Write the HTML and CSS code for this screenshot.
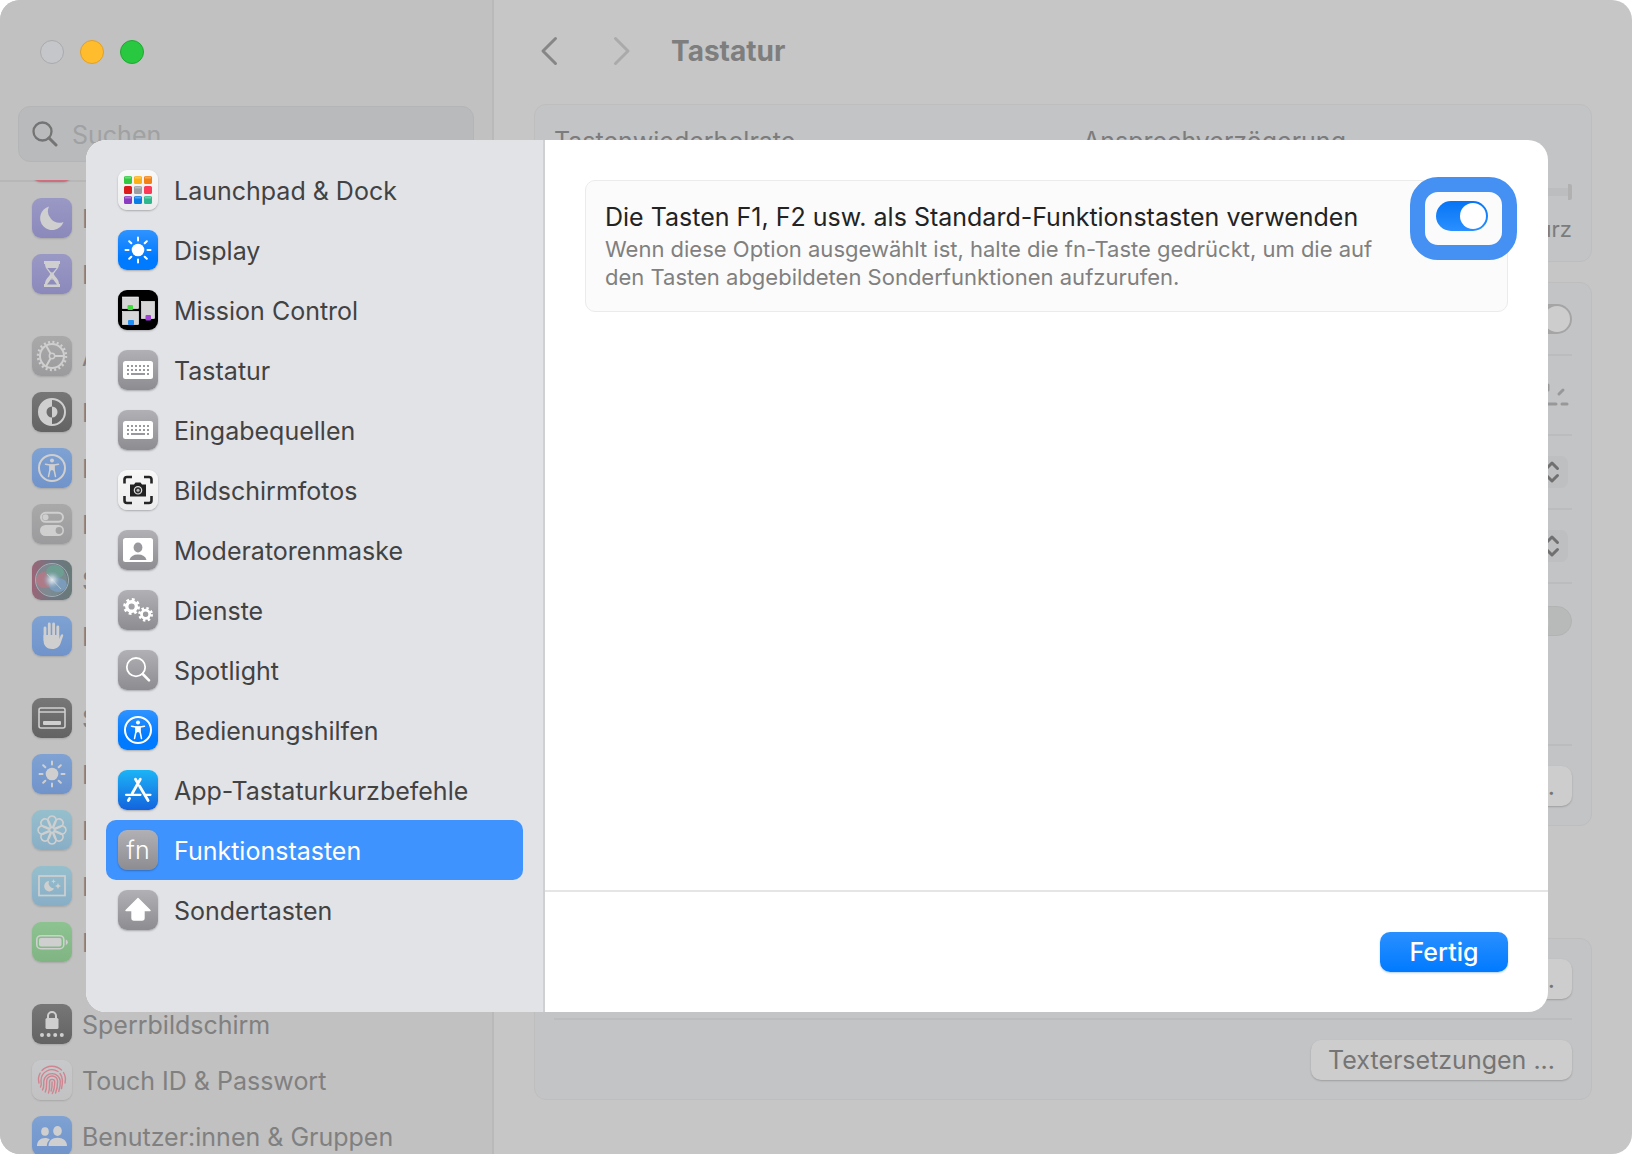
FILE: index.html
```html
<!DOCTYPE html>
<html lang="de">
<head>
<meta charset="utf-8">
<meta name="viewport" content="width=device-width, initial-scale=1">
<title>Tastatur</title>
<link rel="stylesheet" href="styles.css">
</head>
<body>
<svg class="defs" aria-hidden="true">
  <symbol id="g-sun" viewBox="0 0 40 40">
    <circle cx="20" cy="20" r="6.3" fill="currentColor"/>
    <path d="M20 7.5v3M20 29.5v3M7.5 20h3M29.500 20h3M11.200 11.200l2.100 2.100M26.700 26.700l2.100 2.100M28.800 11.200l-2.100 2.100M13.300 26.700l-2.100 2.100" stroke="currentColor" stroke-width="2" stroke-linecap="round"/>
  </symbol>
  <symbol id="g-access" viewBox="0 0 40 40">
    <circle cx="20" cy="20" r="13" fill="none" stroke="currentColor" stroke-width="2"/>
    <circle cx="20" cy="12.600" r="2" fill="currentColor"/>
    <path d="M13.500 16.200l4.500.9v4.400L16.500 28.500M26.500 16.200l-4.500.9v4.400l1.500 7M18 17.100h4M18.700 22l1.300-1 1.300 1" fill="none" stroke="currentColor" stroke-width="1.500" stroke-linecap="round" stroke-linejoin="round"/>
    <path d="M17.500 16.500h5v5.500h-5z" fill="currentColor"/>
  </symbol>
  <symbol id="g-keyboard" viewBox="0 0 40 40">
    <rect x="5" y="11" width="30" height="18" rx="2.500" fill="currentColor"/>
    <path d="M9 16h22M9 20h22" stroke="#98989d" stroke-width="2" stroke-dasharray="2 2"/>
    <path d="M9 24h2M13 24h14M29 24h2" stroke="#98989d" stroke-width="2"/>
  </symbol>
</svg>

<div class="window">
  <aside class="sidebar">
    <header class="sidebar-head">
      <div class="lights">
        <button class="light close" aria-label="Schließen"></button>
        <button class="light minimize" aria-label="Minimieren"></button>
        <button class="light zoom" aria-label="Zoomen"></button>
      </div>
      <label class="search">
        <svg viewBox="0 0 26 26" aria-hidden="true"><circle cx="10.500" cy="10.500" r="9" fill="none" stroke="#747474" stroke-width="2.300"/><path d="M17 17l7 7" stroke="#747474" stroke-width="3" stroke-linecap="round"/></svg>
        <input type="search" placeholder="Suchen" aria-label="Suchen">
      </label>
    </header>
    <nav class="side-list">
      <ul>
        <li><a href="#" aria-label="Töne"><svg class="icon d-red" viewBox="0 0 40 40"></svg></a></li>
        <li><a href="#"><svg class="icon d-purple" viewBox="0 0 40 40"><path d="M17 8.500A12 12 0 1 0 31.500 24 11.500 11.500 0 0 1 17 8.500z" fill="currentColor"/></svg><span>Fokus</span></a></li>
        <li><a href="#"><svg class="icon d-purple" viewBox="0 0 40 40"><path d="M12 7h16v3h-1c0 5-4 7-5.300 10C23 23 27 25 27 30h1v3H12v-3h1c0-5 4-7 5.300-10C17 17 13 15 13 10h-1z" fill="currentColor"/><path d="M15.300 14h9.400L20 19.500zM20 24l5 6.500H15z" fill="#8e8cbd"/><path d="M15 11h10M20 18v8" stroke="#cfcfcf" stroke-width="1"/></svg><span>Bildschirmzeit</span></a></li>
      </ul>
      <ul>
        <li><a href="#"><svg class="icon d-gray" viewBox="0 0 40 40"><g fill="none" stroke="currentColor"><circle cx="20" cy="20" r="12" stroke-width="2"/><circle cx="20" cy="20" r="14" stroke-width="2.500" stroke-dasharray="2 2.398"/><circle cx="20" cy="20" r="2.700" stroke-width="1.500"/><path d="M23 20h9M18.500 17.400l-4.500-7.800M18.500 22.600L14 30.400" stroke-width="2"/></g></svg><span>Allgemein</span></a></li>
        <li><a href="#"><svg class="icon d-dark" viewBox="0 0 40 40"><circle cx="20" cy="20" r="13" fill="none" stroke="currentColor" stroke-width="2"/><path d="M20 7a13 13 0 0 0 0 26v-7.500a5.500 5.500 0 0 1 0-11z" fill="currentColor"/><path d="M20 14.500a5.500 5.500 0 0 1 0 11z" fill="currentColor"/></svg><span>Erscheinungsbild</span></a></li>
        <li><a href="#"><svg class="icon d-blue"><use href="#g-access"/></svg><span>Bedienungshilfen</span></a></li>
        <li><a href="#"><svg class="icon d-gray" viewBox="0 0 40 40"><rect x="9" y="8.800" width="22" height="9" rx="4.500" fill="none" stroke="currentColor" stroke-width="2"/><circle cx="13.500" cy="13.300" r="3" fill="currentColor"/><rect x="8" y="21" width="24" height="11" rx="5.500" fill="currentColor"/><circle cx="27" cy="26.500" r="3.400" fill="#a2a2a3"/></svg><span>Kontrollzentrum</span></a></li>
        <li><a href="#"><svg class="icon d-siri" viewBox="0 0 40 40">
          <defs>
            <radialGradient id="glow"><stop offset="0" stop-color="#e4eaed"/><stop offset=".4" stop-color="#b9cdd9" stop-opacity=".8"/><stop offset="1" stop-color="#8aa4b8" stop-opacity="0"/></radialGradient>
          </defs>
          <circle cx="19" cy="20" r="16" fill="#859b9f" opacity=".55"/>
          <ellipse cx="13" cy="20" rx="9" ry="8" fill="#c97383" opacity=".6"/>
          <ellipse cx="23" cy="12" rx="9" ry="7" fill="#6aa593" opacity=".7"/>
          <ellipse cx="26" cy="25" rx="9" ry="7" fill="#7ba2cc" opacity=".7"/>
          <circle cx="20" cy="20" r="9" fill="url(#glow)"/>
          <path d="M15 14l14 15" fill="none" stroke="#dce6ea" stroke-width="1" opacity=".5"/>
          <circle cx="20" cy="20" r="16.500" fill="none" stroke="#a1aeb5" stroke-width="1"/></svg><span>Siri &amp; Spotlight</span></a></li>
        <li><a href="#"><svg class="icon d-blue" viewBox="0 0 40 40"><path d="M13 12v12M17.300 8v13M21.600 8v13M25.800 11v13" fill="none" stroke="currentColor" stroke-width="2.800" stroke-linecap="round"/><path d="M11.600 19h15.600v4l1.700-4c.7-1.500 2.700-.8 2.300.8l-2.700 7.700C27 31.500 24 33 20 33c-5 0-8.400-3-8.400-8.500z" fill="currentColor"/></svg><span>Datenschutz</span></a></li>
      </ul>
      <ul>
        <li><a href="#"><svg class="icon d-dark" viewBox="0 0 40 40"><rect x="7" y="10" width="26" height="20" rx="2" fill="none" stroke="currentColor" stroke-width="1.600"/><path d="M7 14h26" stroke="currentColor" stroke-width="1.600"/><rect x="11" y="23" width="18" height="4" rx="1" fill="currentColor"/></svg><span>Schreibtisch</span></a></li>
        <li><a href="#"><svg class="icon d-blue"><use href="#g-sun"/></svg><span>Displays</span></a></li>
        <li><a href="#"><svg class="icon d-cyan" viewBox="0 0 40 40"><g fill="none" stroke="currentColor" stroke-width="1.600"><circle cx="20" cy="20" r="2.500"/><path id="petal" d="M18.500 17.500L16.200 12a4.200 4.200 0 1 1 7.600 0l-2.300 5.500"/><use href="#petal" transform="rotate(45 20 20)"/><use href="#petal" transform="rotate(90 20 20)"/><use href="#petal" transform="rotate(135 20 20)"/><use href="#petal" transform="rotate(180 20 20)"/><use href="#petal" transform="rotate(225 20 20)"/><use href="#petal" transform="rotate(270 20 20)"/><use href="#petal" transform="rotate(315 20 20)"/></g></svg><span>Hintergrundbild</span></a></li>
        <li><a href="#"><svg class="icon d-cyan" viewBox="0 0 40 40"><rect x="7" y="10" width="26" height="19.500" fill="none" stroke="currentColor" stroke-width="1.700"/><path d="M17 15a5.200 5.200 0 1 0 5 7.500A5.500 5.500 0 0 1 17 15zM21.500 13l.7 1.700 1.700.7-1.700.7-.7 1.700-.7-1.700-1.700-.7 1.700-.7zM26 17l.9 2.100 2.100.9-2.100.9L26 23l-.9-2.100L23 20l2.100-.9z" fill="currentColor"/></svg><span>Bildschirmschoner</span></a></li>
        <li><a href="#"><svg class="icon d-green" viewBox="0 0 40 40"><rect x="4.800" y="13.700" width="27" height="13" rx="4" fill="none" stroke="currentColor" stroke-width="1.600"/><rect x="7" y="16" width="22.500" height="8.500" rx="2" fill="currentColor"/><path d="M33.800 17.500q2 .8 2 2.800t-2 2.800z" fill="currentColor"/></svg><span>Batterie</span></a></li>
      </ul>
      <ul>
        <li><a href="#"><svg class="icon d-dark" viewBox="0 0 40 40"><rect x="13.500" y="14" width="13" height="11" rx="1.500" fill="currentColor"/><path d="M16 15v-3a4 4 0 0 1 8 0v3" fill="none" stroke="currentColor" stroke-width="2"/><g fill="currentColor"><circle cx="10" cy="31" r="2"/><circle cx="16.600" cy="31" r="2"/><circle cx="23.200" cy="31" r="2"/><circle cx="29.800" cy="31" r="2"/></g></svg><span>Sperrbildschirm</span></a></li>
        <li><a href="#"><svg class="icon d-white" viewBox="0 0 40 40"><g fill="none" stroke="#cf8490" stroke-width="1.400" stroke-linecap="round"><path d="M10 10.500a14 14 0 0 1 19.500-.5M7 23c-1-4 0-8 1.200-10M31.500 12.500c2 3.500 2.300 7 1.500 10.500M8.500 27c1.500-2 .5-4 .5-6.500a11 11 0 0 1 17-9M28 13.500c3.500 4.500 2.800 9.500 1.500 15M10.500 30c2-3 1-6 1.300-9a8.300 8.300 0 0 1 16.500 0c.1 4-.4 7-1.500 10.500M13.300 32c1.700-3.500 1.200-7 1.300-10.500a5.500 5.500 0 0 1 11 0c0 4-.5 7.500-2 11.500M16.500 33c1.500-4 1-7.500 1-11a2.600 2.600 0 0 1 5.200 0c0 4-.5 8-2.400 11.500M20.100 22c.1 3 0 6-1 9"/></g></svg><span>Touch ID &amp; Passwort</span></a></li>
        <li><a href="#"><svg class="icon d-blue" viewBox="0 0 40 40"><g fill="currentColor"><ellipse cx="13" cy="15.500" rx="3.800" ry="4.300"/><path d="M5 30c0-5 3.300-8 8-8 2 0 3.600.5 4.800 1.500-2 1.700-3 4-3 6.500z"/><ellipse cx="25.500" cy="15" rx="4.300" ry="5"/><path d="M16.500 30c0-5.500 3.700-8.300 9-8.300s9.500 2.800 9.500 8.300z"/></g></svg><span>Benutzer:innen &amp; Gruppen</span></a></li>
      </ul>
    </nav>
  </aside>

  <main class="main">
    <header class="toolbar">
      <button class="nav-btn" aria-label="Zurück"><svg viewBox="0 0 18 30"><path d="M15.500 2.500L3 15l12.500 12.500" fill="none" stroke="#868686" stroke-width="3" stroke-linecap="round" stroke-linejoin="round"/></svg></button>
      <button class="nav-btn" aria-label="Vorwärts" disabled><svg viewBox="0 0 18 30"><path d="M2.500 2.500L15 15 2.500 27.500" fill="none" stroke="#aaaaaa" stroke-width="3" stroke-linecap="round" stroke-linejoin="round"/></svg></button>
      <h1>Tastatur</h1>
    </header>
    <section class="group sliders">
      <div class="slider-col"><span class="label">Tastenwiederholrate</span></div>
      <div class="slider-col">
        <span class="label">Ansprechverzögerung</span>
        <div class="track"></div>
        <span class="hint">Kurz</span>
      </div>
    </section>
    <section class="group options">
      <div class="row first"><input type="checkbox" class="switch muted" aria-label="Automatisch anpassen"></div>
      <div class="row brightness"><svg viewBox="0 0 42 26" aria-hidden="true"><path d="M21 3v5M36 8l-4 4M6 8l4 4M2 22h4M12 22h17M35 22h5" fill="none" stroke="#989899" stroke-width="3" stroke-linecap="round"/></svg></div>
      <div class="row pop"><button class="stepper" aria-label="Beleuchtung ausschalten"><svg viewBox="0 0 16 24"><path d="M2.500 8.500L8 3l5.500 5.500M2.500 15.500L8 21l5.500-5.500" fill="none" stroke="#707071" stroke-width="3" stroke-linecap="round" stroke-linejoin="round"/></svg></button></div>
      <div class="row pop"><button class="stepper" aria-label="Aktion der Taste"><svg viewBox="0 0 16 24"><path d="M2.500 8.500L8 3l5.500 5.500M2.500 15.500L8 21l5.500-5.500" fill="none" stroke="#707071" stroke-width="3" stroke-linecap="round" stroke-linejoin="round"/></svg></button></div>
      <div class="row tall"><input type="checkbox" class="switch muted off" aria-label="Tastaturnavigation" disabled></div>
      <div class="row action"><button class="push">Tastaturkurzbefehle ...</button></div>
    </section>
    <section class="group texts">
      <div class="row action"><button class="push">Bearbeiten ...</button></div>
      <div class="row action"><button class="push">Textersetzungen ...</button></div>
    </section>
  </main>

  <div class="sheet" role="dialog" aria-label="Tastaturkurzbefehle">
    <nav class="sheet-nav">
      <a href="#"><svg class="icon launchpad" viewBox="0 0 40 40">
        <g><rect x="6" y="6" width="8" height="8" rx="1.500" fill="#35c944"/><rect x="16" y="6" width="8" height="8" rx="1.500" fill="#fbb016"/><rect x="26" y="6" width="8" height="8" rx="1.500" fill="#f28316"/>
        <rect x="6" y="16" width="8" height="8" rx="1.500" fill="#dc1c1e"/><rect x="16" y="16" width="8" height="8" rx="1.500" fill="#9b9ea2"/><rect x="26" y="16" width="8" height="8" rx="1.500" fill="#fb3c58"/>
        <rect x="6" y="26" width="8" height="8" rx="1.500" fill="#8b3cc0"/><rect x="16" y="26" width="8" height="8" rx="1.500" fill="#0a7fe6"/><rect x="26" y="26" width="8" height="8" rx="1.500" fill="#2fb88d"/></g>
        <path d="M7 7.500h6M17 7.500h6M27 7.500h6M17 17.500h6M7 27.500h6M17 27.500h6M27 27.500h6" stroke="#fff" stroke-width="2" opacity=".3"/></svg><span>Launchpad &amp; Dock</span></a>
      <a href="#"><svg class="icon blue"><use href="#g-sun"/></svg><span>Display</span></a>
      <a href="#"><svg class="icon black" viewBox="0 0 40 40"><g fill="#d6d6d6" stroke="#fff" stroke-width=".6"><rect x="4.500" y="7" width="16" height="11.500"/><rect x="4.500" y="21.500" width="16" height="13"/><rect x="23.500" y="11.500" width="13" height="17"/></g><rect x="9.500" y="15" width="5.500" height="5" rx="1" fill="#3fdc3c"/><rect x="10" y="30" width="6" height="5" rx="1" fill="#1e8ff5"/><rect x="27.500" y="25" width="5.500" height="5.500" rx="1" fill="#a044d6"/></svg><span>Mission Control</span></a>
      <a href="#"><svg class="icon gray"><use href="#g-keyboard"/></svg><span>Tastatur</span></a>
      <a href="#"><svg class="icon gray"><use href="#g-keyboard"/></svg><span>Eingabequellen</span></a>
      <a href="#"><svg class="icon shot" viewBox="0 0 40 40"><path d="M6.500 13.500v-4a2.500 2.500 0 0 1 2.500-2.500h5M26 7h5a2.500 2.500 0 0 1 2.500 2.500v4M6.500 26v4.500A2.500 2.500 0 0 0 9 33h5M26 33h5a2.500 2.500 0 0 0 2.500-2.500V26" fill="none" stroke="#252525" stroke-width="2.600"/><path d="M12 14.500h4l1.500-2h5l1.500 2h4v12H12z" fill="#222"/><circle cx="20" cy="20.300" r="3.700" fill="#333" stroke="#e0e0e0" stroke-width="1.200"/><circle cx="20" cy="20.300" r="1.500" fill="#bbb"/></svg><span>Bildschirmfotos</span></a>
      <a href="#"><svg class="icon gray" viewBox="0 0 40 40"><rect x="5" y="8" width="30" height="24" rx="2.500" fill="currentColor"/><ellipse cx="20" cy="17.500" rx="4.400" ry="5" fill="#98989d"/><path d="M11.500 30q1.500-5.500 8.500-5.500t8.500 5.500z" fill="#939398"/></svg><span>Moderatorenmaske</span></a>
      <a href="#"><svg class="icon gray" viewBox="0 0 40 40"><g fill="none" stroke="currentColor"><circle cx="13.600" cy="16.500" r="4.800" stroke-width="3.400"/><circle cx="13.600" cy="16.500" r="7" stroke-width="2.800" stroke-dasharray="2.800 2.698"/><circle cx="27.600" cy="24.300" r="4.100" stroke-width="2.800"/><circle cx="27.600" cy="24.300" r="6.100" stroke-width="2.600" stroke-dasharray="2.400 2.390"/></g></svg><span>Dienste</span></a>
      <a href="#"><svg class="icon gray" viewBox="0 0 40 40"><circle cx="18" cy="17.200" r="9.200" fill="none" stroke="currentColor" stroke-width="1.800"/><path d="M24.700 24l6.300 6.300" stroke="currentColor" stroke-width="2.600" stroke-linecap="round"/></svg><span>Spotlight</span></a>
      <a href="#"><svg class="icon blue"><use href="#g-access"/></svg><span>Bedienungshilfen</span></a>
      <a href="#"><svg class="icon store" viewBox="0 0 40 40"><g fill="none" stroke="currentColor" stroke-width="2.800" stroke-linecap="round"><path d="M22.300 9.200L14.200 23.500M17.500 9.200l2 3.400M21.500 16l8.600 14.500M11.500 28.500l-1.200 2"/><path d="M8 24.800h14.500M28 24.800h4.500" stroke-width="2.200"/></g></svg><span>App-Tastaturkurzbefehle</span></a>
      <a href="#" class="selected" aria-current="page"><span class="icon gray fn">fn</span><span>Funktionstasten</span></a>
      <a href="#"><svg class="icon gray" viewBox="0 0 40 40"><path d="M20 8.500L32 20.500H26V28q0 2-2 2h-8q-2 0-2-2v-7.500H8z" fill="currentColor" stroke="currentColor" stroke-width="1.400" stroke-linejoin="round"/></svg><span>Sondertasten</span></a>
    </nav>
    <div class="sheet-body">
      <div class="sheet-content">
        <div class="option">
          <div class="option-text">
            <label for="fn-keys">Die Tasten F1, F2 usw. als Standard-Funktionstasten verwenden</label>
            <p>Wenn diese Option ausgewählt ist, halte die fn-Taste gedrückt, um die auf den Tasten abgebildeten Sonderfunktionen aufzurufen.</p>
          </div>
          <div class="ringed"><input type="checkbox" id="fn-keys" class="switch" checked></div>
        </div>
      </div>
      <footer class="sheet-foot"><button class="primary">Fertig</button></footer>
    </div>
  </div>
</div>
</body>
</html>
```
FILE: styles.css
```css
* { box-sizing: border-box; }
body {
  margin: 0;
  background: #fff;
  font-family: Inter, "Liberation Sans", sans-serif;
  font-size: 25px;
  font-optical-sizing: none;
  line-height: 30px;
}
button { font: inherit; font-optical-sizing: none; border: 0; padding: 0; background: none; }
a { color: inherit; text-decoration: none; }
ul { list-style: none; margin: 0; padding: 0; }
.defs { position: absolute; width: 0; height: 0; }

.window {
  position: relative;
  display: grid;
  grid-template-columns: 494px 1fr;
  height: 100vh;
  overflow: hidden;
  border-radius: 20px;
  background: #c6c6c6;
}

/* Settings sidebar behind the sheet */
.sidebar {
  display: flex;
  flex-direction: column;
  min-height: 0;
  background: #c1c1c1;
  border-right: 2px solid #b9b9b9;
}
.sidebar-head {
  flex: none;
  height: 180px;
  padding: 40px 18px 0;
  box-shadow: 0 2px 0 #b7b7b7;
}
.lights { display: flex; gap: 16px; padding-left: 22px; }
.light { width: 24px; height: 24px; border-radius: 50%; border: 1px solid; }
.close { background: #c5c6ca; border-color: #a9aaac; }
.minimize { background: #ffbd2e; border-color: #e0a028; }
.zoom { background: #28c940; border-color: #1fa833; }
.search {
  display: flex;
  align-items: center;
  gap: 14px;
  height: 56px;
  margin-top: 42px;
  padding: 0 13px;
  border: 1px solid #b4b5b6;
  border-radius: 12px;
  background: #b9babb;
}
.search svg { width: 26px; height: 26px; }
.search input {
  flex: 1;
  min-width: 0;
  border: 0;
  padding: 2px 0 0;
  background: none;
  font: inherit;
  outline: 0;
}
.search input::placeholder { color: #a0a1a2; opacity: 1; }
.side-list { flex: 1; min-height: 0; overflow: hidden; color: #808080; }
.side-list ul { margin-bottom: 26px; }
.side-list ul:first-child { margin-top: -46px; }
.side-list a {
  display: flex;
  align-items: center;
  gap: 10px;
  height: 56px;
  padding-left: 32px;
  white-space: nowrap;
}
.icon + span { padding-top: 2px; }

.icon {
  flex: none;
  width: 40px;
  height: 40px;
  border-radius: 9px;
  color: #fff;
  box-shadow: 0 1px 2px rgba(0, 0, 0, .25);
}
.side-list .icon { color: #cfcfcf; box-shadow: 0 1px 2px rgba(0, 0, 0, .14); }
.d-red { background: #cf6f7d; }
.d-purple { background: linear-gradient(#9a98c4, #8b89bb); }
.d-gray { background: linear-gradient(#a9a9aa, #9b9b9d); }
.d-dark { background: linear-gradient(#777, #636363); }
.d-blue { background: linear-gradient(#7fa2d3, #7093cb); }
.d-cyan { background: linear-gradient(#96bfcd, #88aec6); }
.d-green { background: linear-gradient(#8dc390, #80b583); }
.d-white { background: linear-gradient(#c7c8ca, #c2c2c3); }
.d-siri { background: linear-gradient(90deg, #9b6577, #6f7782 50%, #687a79); }
.blue { background: linear-gradient(#2f93ff, #007aff 70%); }
.gray { background: linear-gradient(#b1b1b5, #8c8c91); }
.black { background: #000; }
.launchpad, .shot { background: linear-gradient(#f8f8f8, #ececec); }
.store { background: linear-gradient(#1cb4f6, #1463dd); }
.fn { font-size: 25px; font-weight: 300; line-height: 40px; text-align: center; }

/* Keyboard pane behind the sheet */
.main {
  display: flex;
  flex-direction: column;
  gap: 20px;
  min-width: 0;
  padding: 0 40px;
  color: #7c7c7c;
}
.toolbar { display: flex; align-items: center; height: 84px; padding: 18px 0 0 6px; }
.nav-btn { width: 18px; height: 30px; margin-right: 55px; }
.nav-btn + .nav-btn { margin-right: 40px; }
.nav-btn svg { display: block; }
h1 { margin: 0; font-size: 28px; font-weight: 700; line-height: 34px; color: #7e7e7e; }
.group {
  flex: none;
  padding: 0 19px;
  border: 1px solid #bebebf;
  border-radius: 12px;
  background: #c3c4c6;
}
.sliders { display: grid; grid-template-columns: 1fr 1fr; gap: 40px; height: 158px; }
.slider-col { display: flex; flex-direction: column; padding-top: 21px; }
.track {
  height: 16px;
  margin-top: 28px;
  border-right: 4px solid #b1b1b2;
  border-radius: 2px;
  background: linear-gradient(transparent 4px, #bcbdbe 4px, #bcbdbe 12px, transparent 12px);
}
.hint { margin-top: 14px; align-self: flex-end; font-size: 22px; line-height: 30px; }
.row {
  display: flex;
  align-items: center;
  justify-content: flex-end;
  height: 74px;
  border-bottom: 2px solid #bbbcbe;
}
.row.first { height: 73px; }
.row.action { height: 81px; }
.row.action:last-child { height: 79px; border-bottom: 0; }
.brightness { height: 80px; padding-right: 3px; }
.brightness svg { width: 42px; height: 26px; }
.pop { padding-right: 4px; }
.tall { height: 162px; align-items: flex-start; padding-top: 22px; }
.stepper {
  display: grid;
  place-items: center;
  width: 32px;
  height: 32px;
  border-radius: 7px;
  background: #bebfc0;
}
.stepper svg { width: 16px; height: 24px; }
.push {
  height: 40px;
  padding: 0 17px;
  border-radius: 10px;
  background: #cdcdcd;
  box-shadow: 0 1px 2px rgba(0, 0, 0, .2);
  color: #757575;
}
.texts { margin-top: 92px; }

.switch {
  appearance: none;
  flex: none;
  display: block;
  width: 52px;
  height: 30px;
  margin: 0;
  padding: 2px;
  border-radius: 15px;
  background: linear-gradient(#0674f5, #2a90ff);
}
.switch::before {
  content: "";
  display: block;
  width: 26px;
  height: 26px;
  margin-left: 22px;
  border-radius: 50%;
  background: #fff;
}
.switch.muted { background: #a5a5a6; }
.switch.muted::before { background: #cdcdcd; }
.switch.off { border: 1px solid #b2b3b3; background: #b8baba; }
.switch.off::before { margin-left: 0; background: #bebfc0; }

/* Shortcut sheet */
.sheet {
  position: absolute;
  inset: 140px 84px 142px 86px;
  display: grid;
  grid-template-columns: 459px 1fr;
  overflow: hidden;
  border-radius: 20px;
  background: #fff;
}
.sheet-nav {
  padding: 20px 20px 0;
  border-right: 2px solid #cfd0d2;
  background: #e2e3e7;
  color: #424243;
}
.sheet-nav a {
  display: flex;
  align-items: center;
  gap: 16px;
  height: 60px;
  padding-left: 12px;
  border-radius: 10px;
  white-space: nowrap;
}
.sheet-nav .selected { background: #3f93ff; color: #fff; }
.sheet-body { display: flex; flex-direction: column; min-width: 0; }
.sheet-content { flex: 1; padding: 40px; }
.option {
  display: flex;
  justify-content: space-between;
  padding: 20px 19px;
  border: 1px solid #ebebeb;
  border-radius: 10px;
  background: #fbfbfb;
  color: #232324;
}
.option-text { flex: 1; min-width: 0; }
.option label { display: block; white-space: nowrap; line-height: 32px; }
.option p { margin: 2px 0 0; max-width: 800px; font-size: 22px; line-height: 28px; color: #808080; }
.ringed { position: relative; align-self: flex-start; }
.ringed::after {
  content: "";
  position: absolute;
  inset: -24px -29px -29px -26px;
  border: 15px solid #4591f3;
  border-radius: 28px;
  pointer-events: none;
}
.sheet-foot {
  display: flex;
  justify-content: flex-end;
  padding: 40px;
  border-top: 2px solid #e5e5e5;
}
.primary {
  width: 128px;
  height: 40px;
  border-radius: 10px;
  background: linear-gradient(#2a90ff, #007aff);
  box-shadow: 0 1px 2px rgba(0, 90, 220, .3);
  color: #fff;
  font-weight: 500;
}
```
